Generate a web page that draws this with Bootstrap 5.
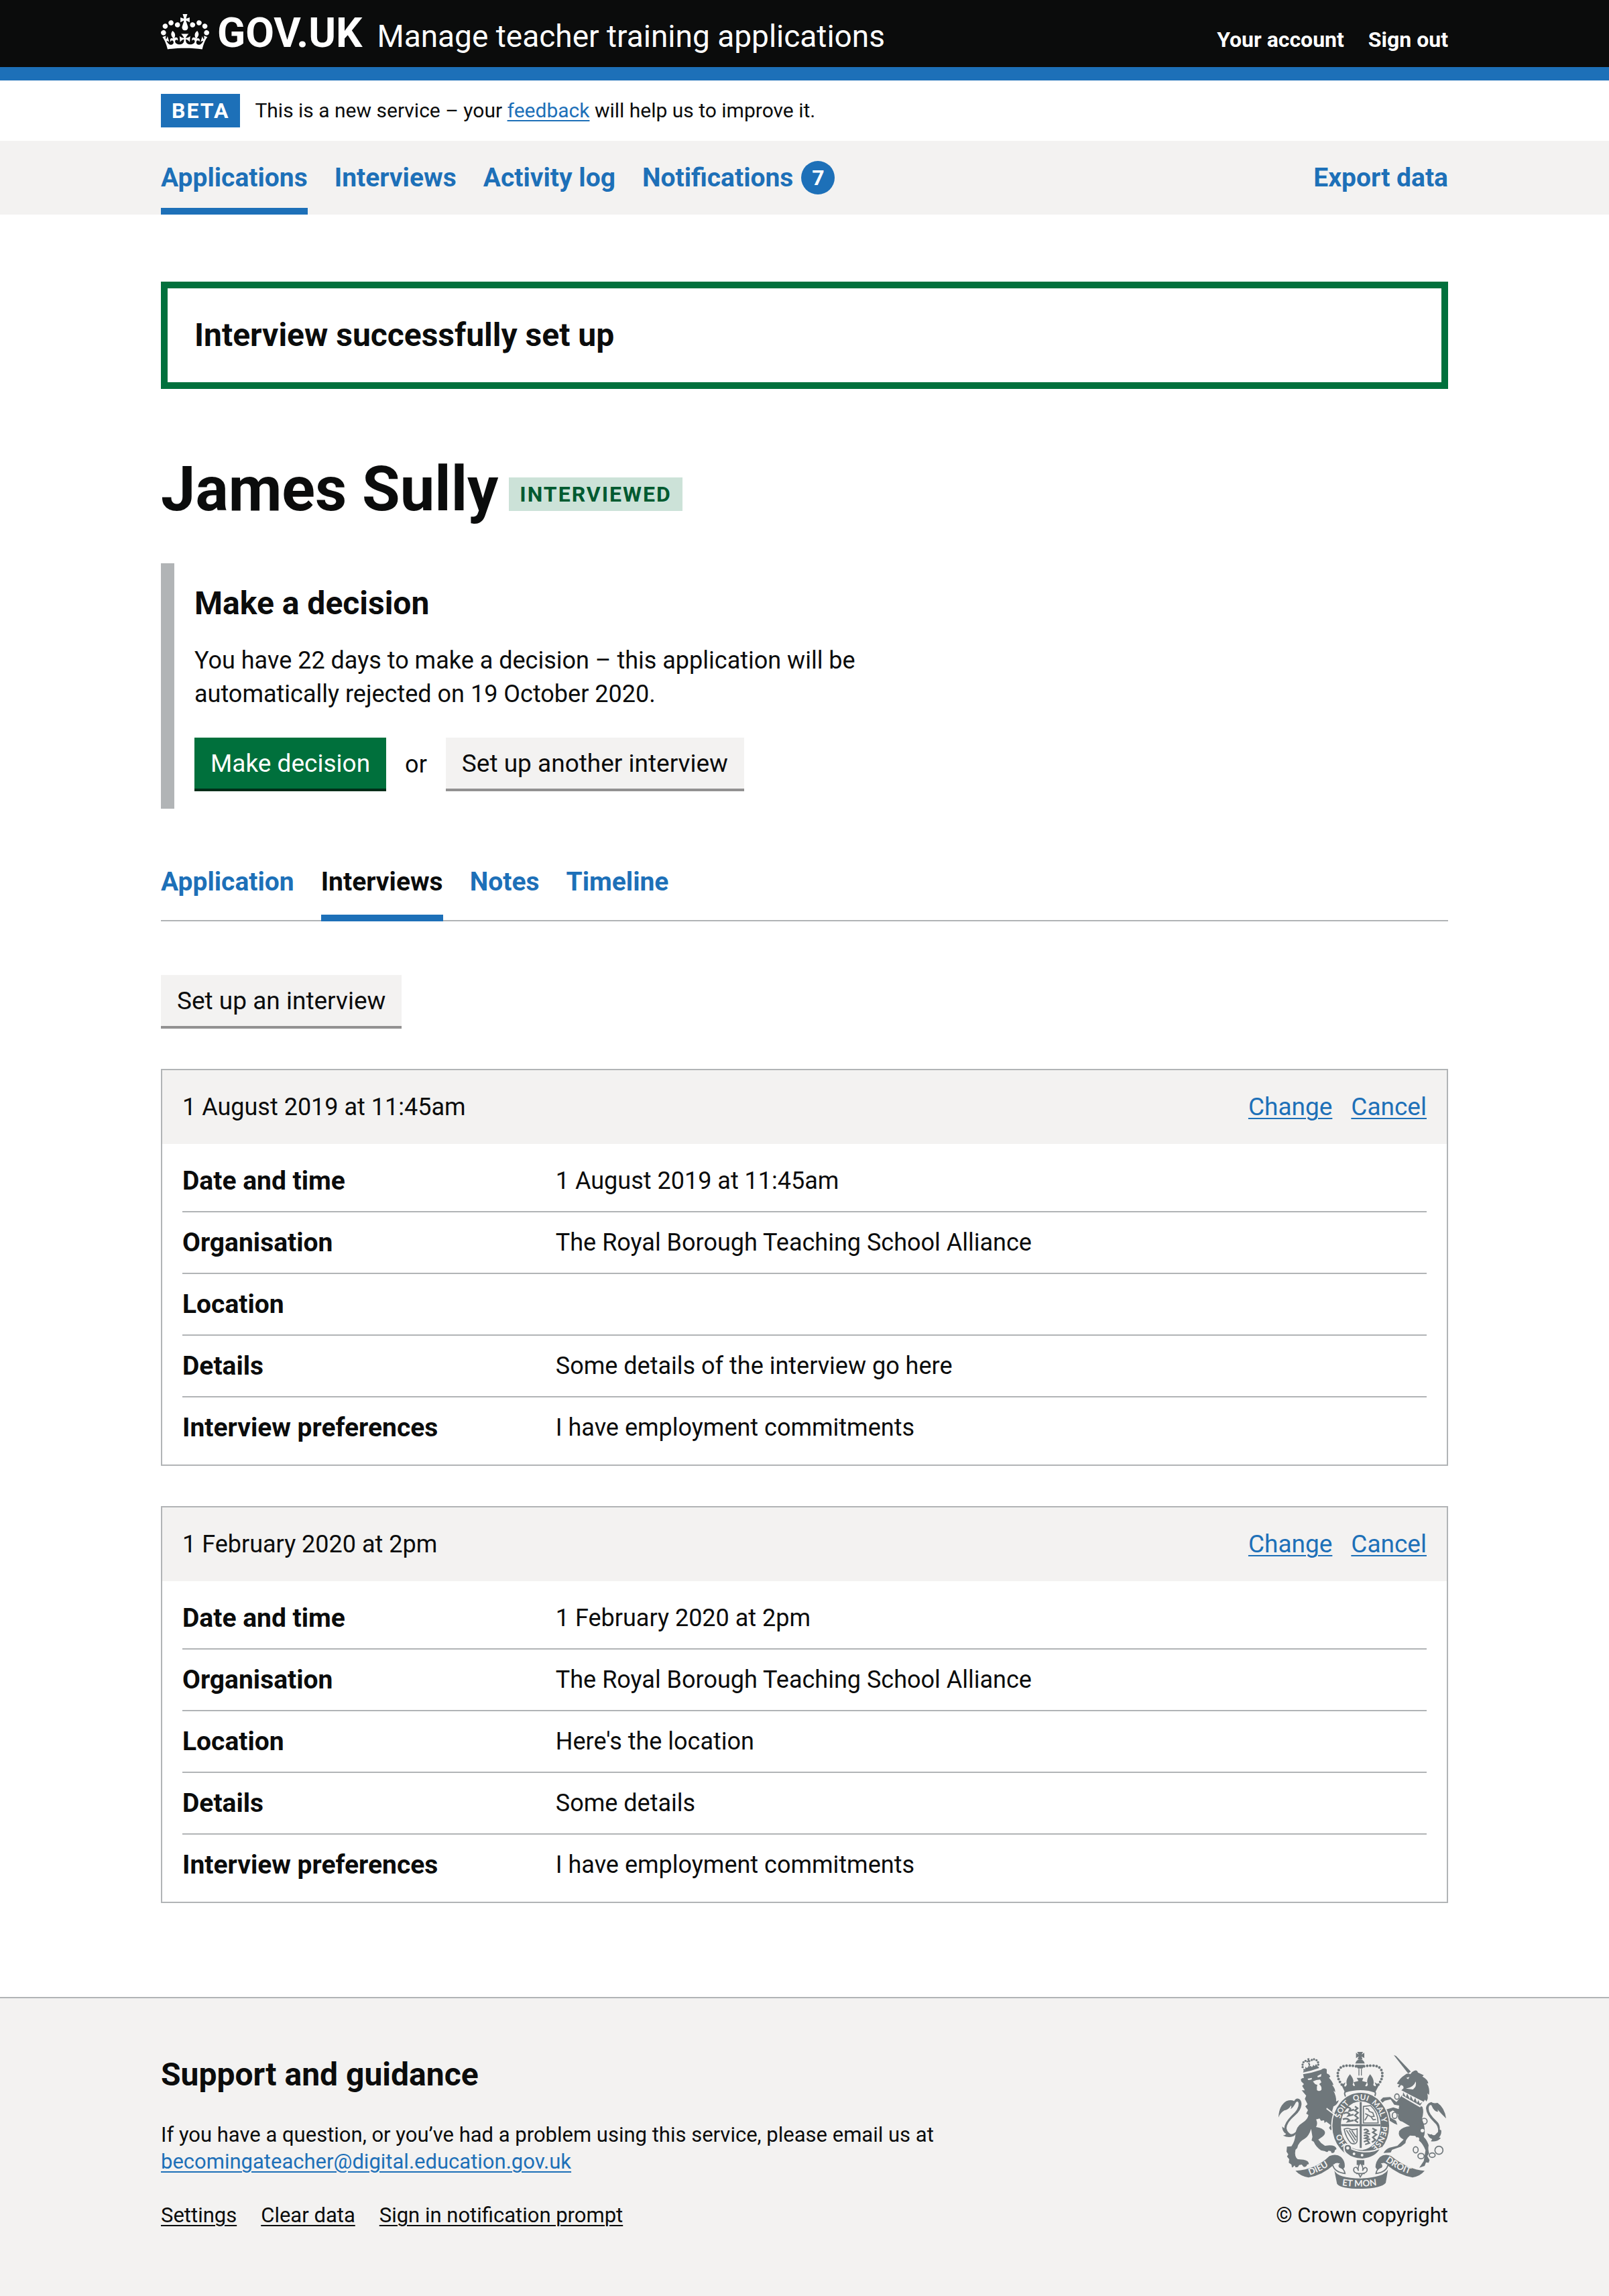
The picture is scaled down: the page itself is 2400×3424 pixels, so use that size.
<!DOCTYPE html>
<html lang="en">
<head>
<meta charset="utf-8">
<meta name="viewport" content="width=device-width, initial-scale=1">
<title>James Sully – Manage teacher training applications</title>
<link href="https://cdn.jsdelivr.net/npm/bootstrap@5.3.0/dist/css/bootstrap.min.css" rel="stylesheet">
<style>
  :root { --ink: #0b0c0c; --brand: #1d70b8; --grey: #f3f2f1; --rule: #b1b4b6; --green: #00703c; }
  body { font-family: Roboto, "Liberation Sans", sans-serif; font-size: 36px; line-height: 50px; color: var(--ink); background: #fff; }
  a { color: var(--brand); text-underline-offset: 4px; text-decoration-thickness: 2px; }
  .wrap { width: 100%; max-width: 1980px; padding: 0 30px; margin: 0 auto; }
  .masthead { background: var(--ink); border-bottom: 20px solid var(--brand); color: #fff; }
  .masthead .wrap { height: 100px; padding-top: 13px; }
  .masthead a { color: #fff; text-decoration: none; }
  .logotype { font-size: 62px; line-height: 72px; font-weight: 700; gap: 12px; }
  .service-name { font-size: 46px; line-height: 60px; margin-left: 22px; }
  .account-links { font-size: 32px; line-height: 40px; font-weight: 700; gap: 36px; }
  .phase { height: 90px; font-size: 30px; line-height: 40px; gap: 22px; }
  .label-tag { font-size: 32px; line-height: 50px; font-weight: 700; letter-spacing: 2px; padding: 0 16px; border-radius: 0; }
  .label-beta { background: var(--brand); color: #fff; }
  .label-green { background: #cce2d8; color: #005a30; margin-bottom: 18px; }
  .primary-nav { background: var(--grey); font-size: 39px; font-weight: 700; }
  .primary-nav a, .sub-nav a { text-decoration: none; }
  .primary-nav ul, .sub-nav ul { gap: 40px; }
  .primary-nav li a { display: flex; align-items: center; height: 110px; border-bottom: 10px solid transparent; padding-top: 10px; gap: 12px; }
  .primary-nav li a.active { border-color: var(--brand); }
  .counter { width: 50px; height: 50px; font-size: 32px; line-height: 50px; background: var(--brand); color: #fff; text-align: center; }
  .success-box { border: 10px solid var(--green); padding: 40px; margin-top: 100px; }
  .title-m { font-size: 48px; line-height: 60px; font-weight: 700; margin: 0; }
  .title-xl { font-size: 92px; line-height: 100px; font-weight: 700; margin: 0; }
  .person { margin: 100px 0 60px; gap: 16px; }
  .inset { border-left: 20px solid var(--rule); padding: 30px 0 26px 30px; }
  .inset p { max-width: 1020px; margin: 30px 0 40px; }
  .action { border: 0; border-radius: 0; font-size: 37px; line-height: 50px; padding: 14px 24px 16px; color: var(--ink); background: var(--grey); box-shadow: inset 0 -4px 0 #929191; height: 80px; }
  .action:hover { background: #dbdad9; }
  .action-go { background: var(--green); color: #fff; box-shadow: inset 0 -4px 0 #002d18; }
  .action-go:hover { background: #005a30; color: #fff; }
  .sub-nav { margin-top: 70px; border-bottom: 2px solid var(--rule); font-size: 39px; font-weight: 700; }
  .sub-nav li a { display: block; height: 98px; padding-top: 14px; border-bottom: 10px solid transparent; margin-bottom: -2px; }
  .sub-nav li a.active { color: var(--ink); border-color: var(--brand); }
  .panel { border: 2px solid var(--rule); margin-top: 60px; }
  .panel-top { background: var(--grey); padding: 30px; }
  .panel-top h2 { font-size: 36px; line-height: 50px; font-weight: 400; margin: 0; }
  .panel-links { font-size: 37px; gap: 28px; }
  .panel dl { margin: 0; padding: 10px 30px; }
  .pair { display: flex; padding: 20px 0; border-bottom: 2px solid var(--rule); }
  .pair:last-child { border-bottom: 0; }
  .pair dt { width: 30%; flex: none; padding-right: 20px; font-size: 39px; }
  .pair dd { margin: 0; }
  .page-foot { margin-top: 140px; border-top: 2px solid var(--rule); background: var(--grey); font-size: 31px; line-height: 40px; padding: 80px 0 100px; }
  .page-foot p { margin: 40px 0; }
  .foot-links { gap: 36px; }
  .foot-links a { color: var(--ink); }
  .crest-note { margin-top: 20px; }
</style>
</head>
<body>
<header class="masthead">
  <div class="wrap d-flex justify-content-between align-items-baseline">
    <div class="d-flex align-items-baseline">
      <a href="#" class="logotype d-flex">
        <svg class="mt-2" width="72" height="53" viewBox="0 0 132 97" fill="#fff" aria-hidden="true"><path d="M25 30.2c3.5 1.5 7.7-.2 9.1-3.7 1.5-3.6-.2-7.8-3.9-9.2-3.6-1.4-7.6.3-9.1 3.9-1.4 3.5.3 7.5 3.9 9zM9 39.5c3.6 1.5 7.8-.2 9.2-3.7 1.5-3.6-.2-7.8-3.9-9.1-3.6-1.5-7.6.2-9.1 3.8-1.4 3.5.3 7.5 3.8 9zM4.4 57.2c3.5 1.5 7.7-.2 9.1-3.8 1.5-3.6-.2-7.7-3.9-9.1-3.5-1.5-7.6.3-9.1 3.8-1.4 3.5.3 7.6 3.9 9.1zm38.3-21.4c3.5 1.5 7.7-.2 9.1-3.8 1.5-3.6-.2-7.7-3.9-9.1-3.6-1.5-7.6.3-9.1 3.8-1.3 3.6.4 7.7 3.9 9.1zm64.4-5.6c-3.6 1.5-7.8-.2-9.1-3.7-1.5-3.6.2-7.8 3.8-9.2 3.6-1.4 7.7.3 9.2 3.9 1.3 3.5-.4 7.5-3.9 9zm15.9 9.3c-3.6 1.5-7.7-.2-9.1-3.7-1.5-3.6.2-7.8 3.7-9.1 3.6-1.5 7.7.2 9.2 3.8 1.5 3.5-.3 7.5-3.8 9zm4.7 17.7c-3.6 1.5-7.8-.2-9.2-3.8-1.5-3.6.2-7.7 3.9-9.1 3.6-1.5 7.7.3 9.2 3.8 1.3 3.5-.4 7.6-3.9 9.1zM89.3 35.8c-3.6 1.5-7.8-.2-9.2-3.8-1.4-3.6.2-7.7 3.9-9.1 3.6-1.5 7.7.3 9.2 3.8 1.4 3.6-.3 7.7-3.9 9.1zM69.7 17.7l8.9 4.7V9.3l-8.9 2.8c-.2-.3-.5-.6-.9-.9L72.4 0H59.6l3.5 11.2c-.3.3-.6.5-.9.9l-8.8-2.8v13.1l8.8-4.7c.3.3.6.7.9.9l-5 15.4v.1c-.2.8-.4 1.6-.4 2.4 0 4.1 3.1 7.5 7 8.1h.2c.3 0 .7.1 1 .1.4 0 .7 0 1-.1h.2c4-.6 7.1-4.1 7.1-8.1 0-.8-.1-1.7-.4-2.4V34l-5.1-15.4c.4-.2.7-.6 1-.9zM66 92.8c16.9 0 32.8 1.1 47.1 3.2 4-16.9 8.9-26.7 14-33.5l-9.6-3.4c1 4.9 1.1 7.2 0 10.2-1.5-1.4-3-4.3-4.2-8.7L108.6 76c2.8-2 5-3.2 7.5-3.3-4.4 9.4-10 11.9-13.6 11.2-4.3-.8-6.3-4.6-5.6-7.9 1-4.7 5.7-5.9 8-.5 4.3-8.7-3-11.4-7.6-8.8 7.1-7.2 7.9-13.5 2.1-21.1-8 6.1-8.1 12.3-4.5 20.8-4.7-5.4-12.1-2.5-9.5 6.2 3.4-5.2 7.9-2 7.2 3.1-.6 4.3-6.4 7.8-13.5 7.2-10.3-.9-10.9-8-11.2-13.8 2.5-.5 7.1 1.8 11 7.3L80.2 60c-4.1 4.4-8 5.3-12.3 5.4 1.4-4.4 8-11.6 8-11.6H55.5s6.4 7.2 7.9 11.6c-4.2-.1-8-1-12.3-5.4l1.4 16.4c3.9-5.5 8.5-7.7 10.9-7.3-.3 5.8-.9 12.8-11.1 13.8-7.2.6-12.9-2.9-13.5-7.2-.7-5 3.8-8.3 7.1-3.1 2.7-8.7-4.6-11.6-9.4-6.2 3.7-8.5 3.6-14.7-4.6-20.8-5.8 7.6-5 13.9 2.2 21.1-4.7-2.6-11.9.1-7.7 8.8 2.3-5.5 7.1-4.2 8.1.5.7 3.3-1.3 7.1-5.7 7.9-3.5.7-9-1.8-13.5-11.2 2.5.1 4.7 1.3 7.5 3.3l-4.7-15.4c-1.2 4.4-2.7 7.2-4.3 8.7-1.1-3-.9-5.3 0-10.2l-9.5 3.4c5 6.9 9.9 16.7 14 33.5 14.8-2.1 30.8-3.2 47.7-3.2z"/></svg>
        <span class="align-self-baseline">GOV.UK</span>
      </a>
      <a href="#" class="service-name">Manage teacher training applications</a>
    </div>
    <nav class="account-links d-flex" aria-label="Account">
      <a href="#">Your account</a>
      <a href="#">Sign out</a>
    </nav>
  </div>
</header>

<div class="wrap phase d-flex align-items-center">
  <strong class="label-tag label-beta">BETA</strong>
  <span>This is a new service – your <a href="#">feedback</a> will help us to improve it.</span>
</div>

<nav class="primary-nav" aria-label="Primary">
  <div class="wrap d-flex justify-content-between">
    <ul class="list-unstyled d-flex m-0">
      <li><a href="#" class="active" aria-current="page">Applications</a></li>
      <li><a href="#">Interviews</a></li>
      <li><a href="#">Activity log</a></li>
      <li><a href="#">Notifications <span class="counter rounded-circle">7</span></a></li>
    </ul>
    <ul class="list-unstyled d-flex m-0">
      <li><a href="#">Export data</a></li>
    </ul>
  </div>
</nav>

<main class="wrap">
  <div class="success-box" role="status">
    <h2 class="title-m">Interview successfully set up</h2>
  </div>

  <div class="person d-flex align-items-end">
    <h1 class="title-xl">James Sully</h1>
    <strong class="label-tag label-green">INTERVIEWED</strong>
  </div>

  <section class="inset">
    <h2 class="title-m">Make a decision</h2>
    <p>You have 22 days to make a decision – this application will be automatically rejected on 19 October 2020.</p>
    <div class="d-flex align-items-center gap-4">
      <button type="button" class="btn action action-go">Make decision</button>
      <span class="px-1">or</span>
      <button type="button" class="btn action">Set up another interview</button>
    </div>
  </section>

  <nav class="sub-nav" aria-label="Application sections">
    <ul class="list-unstyled d-flex m-0">
      <li><a href="#">Application</a></li>
      <li><a href="#" class="active" aria-current="page">Interviews</a></li>
      <li><a href="#">Notes</a></li>
      <li><a href="#">Timeline</a></li>
    </ul>
  </nav>

  <div class="pt-5 mt-4"><button type="button" class="btn action d-block mt-2">Set up an interview</button></div>

  <section class="panel">
    <div class="panel-top d-flex justify-content-between">
      <h2>1 August 2019 at 11:45am</h2>
      <div class="panel-links d-flex"><a href="#">Change</a><a href="#">Cancel</a></div>
    </div>
    <dl>
      <div class="pair"><dt>Date and time</dt><dd>1 August 2019 at 11:45am</dd></div>
      <div class="pair"><dt>Organisation</dt><dd>The Royal Borough Teaching School Alliance</dd></div>
      <div class="pair"><dt>Location</dt><dd></dd></div>
      <div class="pair"><dt>Details</dt><dd>Some details of the interview go here</dd></div>
      <div class="pair"><dt>Interview preferences</dt><dd>I have employment commitments</dd></div>
    </dl>
  </section>

  <section class="panel">
    <div class="panel-top d-flex justify-content-between">
      <h2>1 February 2020 at 2pm</h2>
      <div class="panel-links d-flex"><a href="#">Change</a><a href="#">Cancel</a></div>
    </div>
    <dl>
      <div class="pair"><dt>Date and time</dt><dd>1 February 2020 at 2pm</dd></div>
      <div class="pair"><dt>Organisation</dt><dd>The Royal Borough Teaching School Alliance</dd></div>
      <div class="pair"><dt>Location</dt><dd>Here's the location</dd></div>
      <div class="pair"><dt>Details</dt><dd>Some details</dd></div>
      <div class="pair"><dt>Interview preferences</dt><dd>I have employment commitments</dd></div>
    </dl>
  </section>
</main>

<footer class="page-foot">
  <div class="wrap d-flex justify-content-between align-items-end">
    <div>
      <h2 class="title-m pt-1">Support and guidance</h2>
      <p>If you have a question, or you’ve had a problem using this service, please email us at<br><a href="#">becomingateacher@digital.education.gov.uk</a></p>
      <div class="foot-links d-flex"><a href="#">Settings</a><a href="#">Clear data</a><a href="#">Sign in notification prompt</a></div>
    </div>
    <div class="d-flex flex-column align-items-center">
      <svg width="250" height="204" viewBox="72 90 750 612" role="img" aria-label="Royal coat of arms">
        <defs>
          <path id="garter" d="M440 531A94 113 0 0 1 440 305A94 113 0 0 1 440 531"/>
          <path id="ribL" d="M212 642Q270 622 316 586"/>
          <path id="ribM" d="M352 686Q440 700 526 684"/>
          <path id="ribR" d="M550 578Q606 622 684 644"/>
        </defs>
        <g fill="#6f777b" stroke="none">
          <!-- lion: tail, body, crown -->
          <path d="M72 383Q74 330 108 310Q128 302 142 310Q150 294 164 300Q176 308 175 326Q172 352 146 374Q108 406 108 432Q112 452 128 458Q144 456 156 440Q154 460 136 468Q116 476 92 464Q104 462 106 456Q90 450 88 424L98 432Q98 408 130 376Q164 346 162 322Q160 306 150 316Q138 340 126 346Q132 334 128 330Q116 350 98 352Q80 362 72 383Z"/>
          <path d="M172 212Q178 206 186 206L182 190Q220 184 262 170Q278 158 288 168L288 186Q300 190 304 200L298 206Q314 222 318 238L312 238Q326 254 326 270L318 264Q332 290 330 312L342 306Q336 326 318 334L312 356Q330 372 338 396L344 416L350 438L340 446L334 436L330 446L318 444L318 432L306 440L298 430L306 418L286 402L278 408L276 396L262 398L256 388L240 392Q250 408 240 426Q272 430 280 448Q282 462 262 474L250 482Q262 500 280 510L300 508Q328 508 332 524L324 530Q324 544 310 542L306 534L296 532Q292 542 280 534L262 530Q240 516 230 492L220 486L224 470L218 434Q208 466 190 478Q160 494 156 520L148 528Q142 558 158 570L184 572Q208 576 208 592L200 594Q198 606 184 604L176 594L164 596Q160 608 148 606L144 598Q134 610 132 606L130 594L118 586L120 570L110 558L116 548L108 536L110 514L130 512Q146 490 148 460Q150 424 178 408Q204 392 206 372L196 366L204 350L192 334L202 324L190 300L196 286L176 262L190 262L178 242L186 234L174 222Z"/>
          <path d="M182 182Q216 176 254 162L250 156Q216 172 184 176Z"/>
          <g><circle cx="180" cy="158" r="5"/><circle cx="180" cy="147" r="5"/><circle cx="184" cy="136" r="5"/><circle cx="193" cy="130" r="5"/><circle cx="221" cy="126" r="5"/><circle cx="231" cy="123" r="5"/><circle cx="242" cy="127" r="5"/><circle cx="249" cy="136" r="5"/><circle cx="250" cy="147" r="5"/>
          <path d="M200 120L204 128L196 132L200 138L207 134L214 146L210 156L216 152L222 158L228 148L234 154L240 144L246 152L250 160Q216 174 184 176L184 164L192 168L192 156L198 162L204 158L208 150L204 140L212 136L216 130L210 126L210 118Z"/></g>
          <!-- unicorn: horn, body, tail -->
          <path d="M588 104L598 108L664 178L652 186Z"/>
          <path d="M602 232Q616 206 636 194Q650 182 662 190L670 180Q690 164 696 182L722 194L716 200Q742 214 742 232L736 230Q750 252 746 282L738 276Q744 298 734 312L728 304L720 314L634 268L622 262L632 252L630 242L620 238L612 250L606 244L614 236Z"/>
          <path d="M626 282Q634 294 716 336Q724 356 714 390Q726 420 726 436Q728 458 722 470Q738 486 744 508Q740 524 746 544L738 556L748 574L744 586L732 584L726 600L702 608Q714 590 722 578L730 530Q718 500 700 486L684 466L660 464Q640 482 640 498L620 514L580 528L574 540L542 542Q552 524 570 518L604 510L632 482Q604 470 612 444Q628 424 660 422L626 402Q600 396 608 370L584 352L570 360L574 384L598 398L604 416L590 410L566 396L552 362L544 350L586 338L610 346L612 330L590 326L574 302L548 308L536 318L528 306L540 294L572 292L600 314Z"/>
          <path d="M822 388Q816 340 784 318Q764 322 756 314Q734 320 732 342Q734 372 768 404Q790 422 786 448L772 462Q762 464 758 458Q748 462 738 454Q742 474 760 480L754 490Q780 494 798 476Q794 472 790 474Q804 456 800 440L794 438Q796 414 778 398Q744 366 744 344Q744 326 756 328Q768 358 786 358L784 348Q800 366 822 388Z"/>
          <!-- royal crown -->
          <path d="M424 90H450L444 102L456 94V118L444 110L448 124H426L431 110L419 118V94L431 102ZM416 142Q420 124 437 124Q454 124 458 142ZM416 148H458L448 164H427Z"/>
          <path d="M430 166H434V196H430ZM441 166H445V196H441Z"/>
          <path d="M354 238L372 226L366 242Q372 250 378 236Q370 216 392 190Q414 216 404 236Q410 248 414 240L408 226L430 220L422 206L452 206L446 220L468 226L460 242Q468 248 472 236Q462 216 482 190Q504 216 496 238Q506 248 508 240L502 226L522 238L504 272Q440 250 370 272Z"/>
        </g>
        <!-- crown pearls and shield frame -->
        <g fill="none" stroke="#6f777b">
          <path d="M355 236Q330 204 340 174Q352 150 380 152Q406 150 424 156" stroke-width="12" stroke-linecap="round" stroke-dasharray="0 14"/>
          <path d="M519 236Q544 204 534 174Q522 150 494 152Q468 150 450 156" stroke-width="12" stroke-linecap="round" stroke-dasharray="0 14"/>
          <path d="M372 290Q360 266 384 262Q440 246 490 262Q514 266 502 290" stroke-width="6"/>
        </g>
        <ellipse cx="440" cy="420" rx="132" ry="152" fill="#f3f2f1"/>
        <ellipse cx="440" cy="420" rx="108" ry="128" fill="none" stroke="#6f777b" stroke-width="38"/>
        <g fill="none" stroke="#6f777b">
          <path d="M440 314V520M352 418H528" stroke-width="9"/>
          <path d="M372 342Q384 334 394 344L388 354L410 348M364 366Q378 356 390 368L384 376L408 370M360 392Q376 384 388 394L382 402L408 396M414 334L426 342L414 352L428 362L414 374L428 386L414 396L428 406" stroke-width="7"/>
          <path d="M454 440Q466 432 474 444L460 452L482 458M454 466Q466 458 474 470L460 476L482 482M454 492L470 486L478 498L460 504M492 432L508 440L494 450L510 460L494 472L506 484L490 494" stroke-width="7"/>
          <path d="M452 334V408H518Q518 360 484 330ZM462 344Q476 342 478 356L494 362L500 378L486 380L472 372L466 384L458 396M486 380L496 394L508 392M472 372L460 366" stroke-width="5"/>
          <path d="M366 436Q384 428 394 436Q408 440 424 434V488Q420 508 396 498Q374 474 366 436ZM376 440L412 496M388 440L418 486M400 442L420 472" stroke-width="5"/>
        </g>
        <g font-family="Lato, sans-serif" font-weight="700" font-size="35" fill="#f3f2f1">
          <text><textPath href="#garter" startOffset="70">HO</textPath></text>
          <text><textPath href="#garter" startOffset="192">SOIT</textPath></text>
          <text><textPath href="#garter" startOffset="293">QUI</textPath></text>
          <text><textPath href="#garter" startOffset="375">MAL</textPath></text>
          <text><textPath href="#garter" startOffset="454">Y</textPath></text>
          <text><textPath href="#garter" startOffset="492">PENSE</textPath></text>
        </g>
        <!-- garter buckle and pendant -->
        <path d="M366 512Q372 500 390 504Q402 512 400 524Q444 544 500 532L530 520Q510 564 446 570Q400 566 380 548Q362 538 366 512Z" fill="#6f777b" stroke="#f3f2f1" stroke-width="6"/>
        <circle cx="382" cy="520" r="7" fill="#f3f2f1"/><circle cx="410" cy="546" r="6" fill="#f3f2f1"/><circle cx="446" cy="552" r="6" fill="#f3f2f1"/>
        <path d="M422 574H456V596H422Z" fill="#6f777b"/>
        <path d="M438 586Q454 606 448 622Q458 598 468 612Q472 626 456 632L448 634L438 650L430 634L420 632Q404 626 410 610Q422 598 430 622Q424 606 438 586ZM420 634H458" fill="#f3f2f1" stroke="#6f777b" stroke-width="5"/>
        <!-- motto ribbon -->
        <path d="M148 622Q240 616 300 556Q330 544 352 560Q372 580 368 606Q352 630 338 628L326 612Q344 606 350 592Q330 580 318 596Q270 640 206 652Q170 646 148 622ZM726 622Q650 616 576 556Q548 544 526 560Q506 580 506 606Q520 630 536 628L552 612Q534 606 528 592Q546 580 558 596Q610 640 672 652Q706 646 726 622Z" fill="#6f777b"/>
        <path d="M314 594Q322 628 370 634Q366 612 346 606Q338 598 352 588M562 594Q556 628 508 634Q512 612 532 606Q538 598 526 588" fill="#f3f2f1" stroke="#6f777b" stroke-width="5"/>
        <path d="M322 620Q336 654 440 656Q546 652 562 616L552 676Q530 702 440 702Q350 702 334 680Z" fill="#6f777b"/>
        <g font-family="Lato, sans-serif" font-weight="700" font-size="40" fill="#f3f2f1">
          <text><textPath href="#ribL">DIEU</textPath></text>
          <text><textPath href="#ribM" startOffset="4">ET MON</textPath></text>
          <text><textPath href="#ribR">DROIT</textPath></text>
        </g>
        <!-- lion face and mane highlights, unicorn collar and chain -->
        <g fill="#f3f2f1">
          <path d="M202 210L222 206L220 214L206 216ZM246 198L264 188L262 200L248 204ZM226 222Q240 214 258 214L264 226L254 234Q268 246 264 260Q252 270 244 260Q242 246 246 238L236 234Z"/>
          <path d="M288 340L334 376L328 378L286 346Z"/>
          <path d="M644 206L658 202L652 212ZM642 254Q676 250 686 222Q692 244 674 258Z"/>
          <circle cx="716" cy="442" r="8"/><circle cx="694" cy="480" r="8"/>
          <path d="M628 266L720 312L706 338L624 290Z"/>
        </g>
        <path d="M630 270L628 286L706 330L716 314L704 322L698 306L692 318L684 296L676 310L664 286L660 302L648 276L642 292Z" fill="#6f777b"/>
        <g fill="none" stroke="#6f777b" stroke-width="5">
          <ellipse cx="602" cy="290" rx="10" ry="12"/><ellipse cx="592" cy="374" rx="11" ry="14"/><circle cx="724" cy="400" r="13"/><ellipse cx="686" cy="528" rx="11" ry="14"/><ellipse cx="710" cy="556" rx="14" ry="12"/><ellipse cx="760" cy="552" rx="13" ry="10"/><circle cx="790" cy="530" r="18"/>
        </g>
      </svg>
      <span class="crest-note">© Crown copyright</span>
    </div>
  </div>
</footer>
<script src="https://cdn.jsdelivr.net/npm/bootstrap@5.3.0/dist/js/bootstrap.bundle.min.js"></script>
</body>
</html>
